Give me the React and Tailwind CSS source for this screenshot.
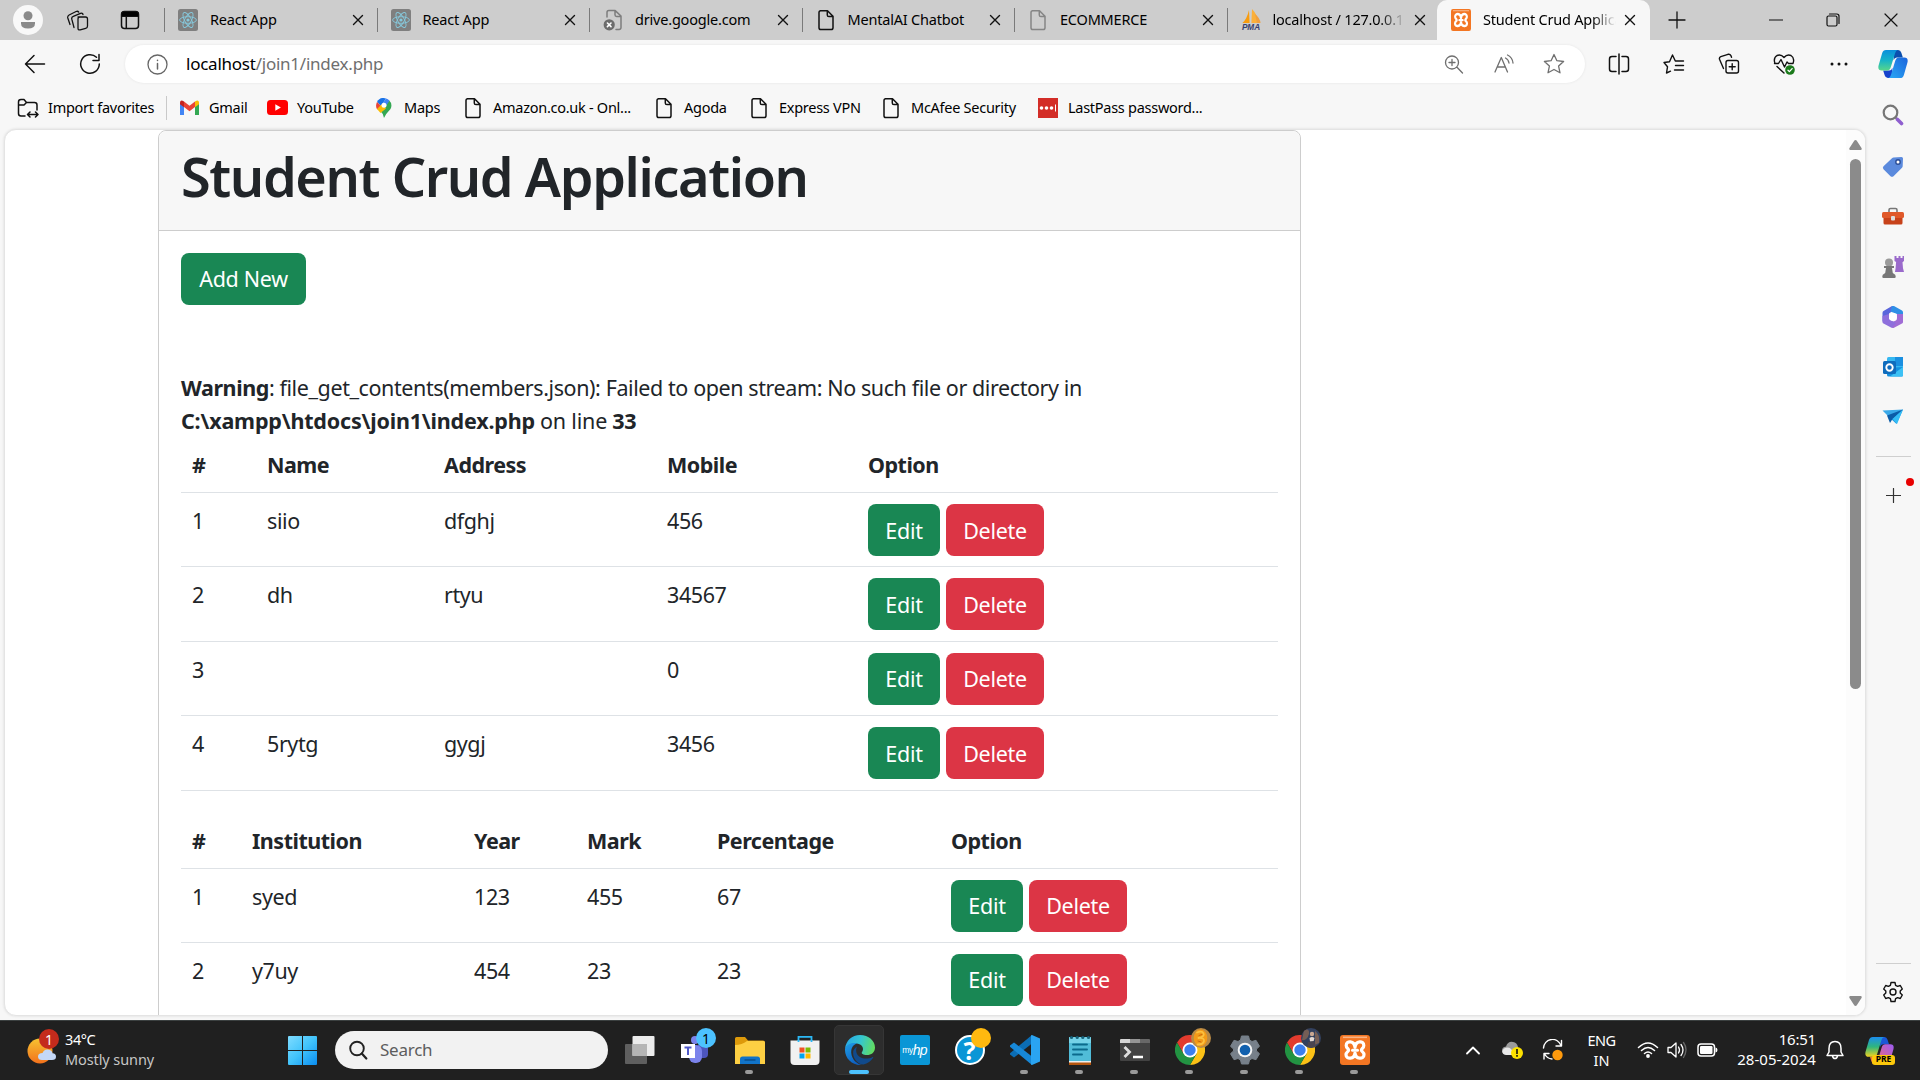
import React from "react";

/* ---------- small drawing helpers ---------- */

function Svg({ w = 20, h, vb = "0 0 20 20", children, className = "" }) {
  return (
    <svg width={w} height={h || w} viewBox={vb} fill="none" className={`shrink-0 ${className}`}>
      {children}
    </svg>
  );
}

const Line = ({ d, c = "#111", s = 1.3 }) => (
  <path d={d} stroke={c} strokeWidth={s} strokeLinecap="round" strokeLinejoin="round" />
);

/* ---------- browser icons ---------- */

const PageIcon = ({ c = "#111" }) => (
  <Svg w={20} h={22} vb="0 0 20 22">
    <Line c={c} s={1.5} d="M5 1.8h6.5L17 7.3v11.4a1.8 1.8 0 0 1-1.8 1.8H4.8A1.8 1.8 0 0 1 3 18.7V3.6A1.8 1.8 0 0 1 4.8 1.8M11.3 2v4a1.6 1.6 0 0 0 1.6 1.6h4" />
  </Svg>
);

const BlockedPageIcon = () => (
  <Svg w={20} h={22} vb="0 0 20 22">
    <Line c="#7d7d7d" s={1.5} d="M4 8V3.4A1.8 1.8 0 0 1 5.8 1.6h6.4L18 7v11.6a1.8 1.8 0 0 1-1.8 1.8H13M12 1.8v4a1.6 1.6 0 0 0 1.6 1.6h4" />
    <circle cx="6.2" cy="15.8" r="5.6" fill="#6c6c6c" />
    <Line c="#fff" s={1.6} d="M4.4 14l3.6 3.6M8 14l-3.6 3.6" />
  </Svg>
);

const ReactIcon = () => (
  <Svg w={20} h={22} vb="0 0 20 22">
    <rect width="20" height="22" rx="2.5" fill="#7f7f7f" />
    <g stroke="#86cade" strokeWidth=".9">
      <ellipse cx="10" cy="11" rx="8.4" ry="3.3" />
      <ellipse cx="10" cy="11" rx="8.4" ry="3.3" transform="rotate(60 10 11)" />
      <ellipse cx="10" cy="11" rx="8.4" ry="3.3" transform="rotate(120 10 11)" />
    </g>
    <circle cx="10" cy="11" r="1.6" fill="#86cade" />
  </Svg>
);

const PmaIcon = () => (
  <Svg w={22} h={22} vb="0 0 22 22">
    <path d="M9 1L9.6 14H2.4Q7 10 9 1Z" fill="#f89c0e" />
    <path d="M12 0Q18 6 18 14H11.4Z" fill="#fbb03b" />
    <path d="M15 5Q20 9 20.5 14H17Z" fill="#f0a040" />
    <text x="11" y="21.4" textAnchor="middle" fontSize="8.2" fontWeight="bold" fontStyle="italic" fill="#37406f" fontFamily="Liberation Sans, sans-serif">PMA</text>
  </Svg>
);

const XamppIcon = ({ w = 20, h = 22 }) => (
  <svg width={w} height={h} viewBox="0 0 30 30" preserveAspectRatio="none" fill="none" className="shrink-0">
    <rect width="30" height="30" rx="3" fill="#f37623" />
    <path d="M3 1.5h24v1.6H3z" fill="#f9b384" />
    <path d="M15 12.4C14.4 5.2 6.2 5.4 6.2 10.4C6.2 13 8.6 13.6 8.6 15.2C8.6 16.6 6 17 6 19.8C6 24.6 14.4 24.6 15 18C15.600 24.600 24 24.600 24 19.800C24 17 21.400 16.600 21.400 15.200C21.400 13.600 23.800 13 23.800 10.400C23.800 5.400 15.600 5.200 15 12.400Z" stroke="#fff" strokeWidth="3.2" strokeLinejoin="round" />
    <path d="M12.500 15.200h5" stroke="#fff" strokeWidth="3" strokeLinecap="round" />
  </svg>
);

const CloseX = () => (
  <Svg w={12} vb="0 0 12 12">
    <Line s={1.4} d="M1.500 1.500l9 9M10.500 1.500l-9 9" />
  </Svg>
);

const CopilotIcon = ({ s = 31, warm = false }) => (
  <Svg w={s} vb="0 0 32 32">
    <defs>
      <linearGradient id={warm ? "cw1" : "cc1"} x1="0" y1="0" x2="0" y2="1">
        <stop stopColor={warm ? "#1b8df0" : "#0a8fdc"} />
        <stop offset=".5" stopColor={warm ? "#2fb67c" : "#16b3c8"} />
        <stop offset="1" stopColor={warm ? "#f2d21f" : "#58d68a"} />
      </linearGradient>
      <linearGradient id={warm ? "cw2" : "cc2"} x1="1" y1="0" x2="0" y2="1">
        <stop stopColor={warm ? "#9b5cf5" : "#1b64dc"} />
        <stop offset="1" stopColor={warm ? "#f76a6a" : "#2aa9f5"} />
      </linearGradient>
    </defs>
    <path d="M17 1h4.500q2.500 0 3.400 3l1.600 5H20q-2.500 0-3.400 3z" fill={warm ? "#1a57d6" : "#0b4fae"} />
    <path d="M15 31h-4.500q-2.500 0-3.400-3l-1.600-5H12q2.500 0 3.400-3z" fill={warm ? "#f27d3a" : "#1542cc"} />
    <path d="M8.500 1H21q-2 .6-2.800 3.400l-4.600 15Q12.600 23 9.500 23H4Q-.6 23 .6 17.500L4.400 4.400Q5.500 1 8.500 1Z" fill={warm ? "url(#cw1)" : "url(#cc1)"} />
    <path d="M23.500 31H11q2-.6 2.800-3.400l4.600-15Q19.400 9 22.500 9H28q4.600 0 3.400 5.500L27.600 27.600Q26.500 31 23.500 31Z" fill={warm ? "url(#cw2)" : "url(#cc2)"} />
  </Svg>
);

/* ---------- tab strip ---------- */

function Tab({ icon, title, fade = false }) {
  return (
    <div className="flex h-10 w-[212.500px] shrink-0 items-center">
      <div className="h-6 w-px shrink-0 bg-[#7a7a7a]" />
      <div className="ml-3 flex w-[22px] shrink-0 justify-center">{icon}</div>
      <div className={`ml-[11px] flex-1 overflow-hidden whitespace-nowrap text-[14.500px] tracking-[-0.200px] ${fade ? "[mask-image:linear-gradient(to_right,black_80%,transparent)]" : ""}`}>{title}</div>
      <div className="mr-[13px] ml-2"><CloseX /></div>
    </div>
  );
}

function TabStrip() {
  return (
    <div className="flex h-10 items-center bg-[#cdcdcd]">
      <div className="ml-[13px] flex h-[30px] w-[30px] items-center justify-center rounded-full bg-[#f8f8f8]">
        <Svg w={18} vb="0 0 18 18">
          <circle cx="9" cy="4.700" r="4.500" fill="#8a8a8a" />
          <path d="M2 11h14v1.500q0 5-7 5t-7-5z" fill="#8a8a8a" />
        </Svg>
      </div>
      <div className="ml-[23px]">
        <Svg w={23} h={21} vb="0 0 23 21">
          <Line s={1.300} d="M12 7h7.500q2 0 2 2v7q0 2-1.800 2.400l-5.500 1.500q-2.200.4-2.200-1.700V9q0-2 2-2M8 17.500L5.800 9.200q-.5-2.200 1.500-2.900l7.200-3q2-.6 2.500 1.200M4 14.500L1.800 8q-.5-2 1.300-3l7-3.500q1.800-.7 2.600.6" />
        </Svg>
      </div>
      <div className="ml-[31px]">
        <Svg w={20} vb="0 0 20 20">
          <rect x="1.500" y="1.500" width="17" height="17" rx="3" stroke="#111" strokeWidth="1.500" />
          <path d="M1.500 6.500V4a2.500 2.500 0 0 1 2.500-2.500h12A2.500 2.500 0 0 1 18.500 4v2.500z" fill="#000" stroke="#111" />
          <path d="M6.300 7v11" stroke="#111" strokeWidth="1.500" />
        </Svg>
      </div>
      <div className="ml-6 flex">
        <Tab icon={<ReactIcon />} title="React App" />
        <Tab icon={<ReactIcon />} title="React App" />
        <Tab icon={<BlockedPageIcon />} title="drive.google.com" />
        <Tab icon={<PageIcon />} title="MentalAI Chatbot" />
        <Tab icon={<PageIcon c="#858585" />} title="ECOMMERCE" />
        <Tab icon={<PmaIcon />} title="localhost / 127.0.0.1" fade />
      </div>
      <div className="-ml-[2px] flex h-10 w-[213px] items-center rounded-t-[10px] bg-[#f7f7f7]">
        <div className="ml-[14px]"><XamppIcon w={20} h={22} /></div>
        <div className="ml-3 flex-1 overflow-hidden text-[14.500px] tracking-[-0.220px] whitespace-nowrap [mask-image:linear-gradient(to_right,black_82%,transparent)]">Student Crud Application</div>
        <div className="mr-[14px] ml-2"><CloseX /></div>
      </div>
      <div className="ml-[18px]"><Svg w={18} vb="0 0 18 18"><Line d="M9 1v16M1 9h16" /></Svg></div>
      <div className="ml-[83px]"><Svg w={14} vb="0 0 14 14"><Line s={1.200} d="M.5 7h13" /></Svg></div>
      <div className="ml-[43px]">
        <Svg w={14} vb="0 0 14 14">
          <rect x="1" y="3" width="10" height="10" rx="1.500" stroke="#111" strokeWidth="1.200" />
          <Line s={1.200} d="M3.500 1h7.300q2.200 0 2.200 2.200v7.300" />
        </Svg>
      </div>
      <div className="ml-[44px]"><Svg w={14} vb="0 0 14 14"><Line s={1.200} d="M1 1l12 12M13 1L1 13" /></Svg></div>
    </div>
  );
}

/* ---------- address row ---------- */

function Toolbar() {
  return (
    <div className="flex h-12 items-center bg-[#f7f7f7]">
      <div className="ml-6"><Svg w={22} vb="0 0 22 22"><Line s={1.500} d="M20.500 11H1.500M10 2.500L1.500 11l8.500 8.500" /></Svg></div>
      <div className="ml-[33px]"><Svg w={22} vb="0 0 22 22"><Line s={1.500} d="M20.300 11A9.300 9.300 0 1 1 17.500 4.300M20 1.500v6h-6" /></Svg></div>
      <div className="ml-6 flex h-[38px] w-[1460px] items-center rounded-full bg-white shadow-[0_0_3px_rgba(0,0,0,0.080)]">
        <div className="ml-[22px]">
          <Svg w={21} vb="0 0 21 21">
            <circle cx="10.500" cy="10.500" r="9.500" stroke="#666" strokeWidth="1.300" />
            <Line c="#666" s={1.500} d="M10.500 9.500v5.500M10.500 6.300v.2" />
          </Svg>
        </div>
        <div className="ml-[18px] text-[17px] tracking-[-0.240px] text-[#6f6f6f]"><span className="text-black">localhost</span>/join1/index.php</div>
        <div className="mr-[20px] ml-auto flex items-center gap-[28px]">
          <Svg w={21} vb="0 0 21 21"><Line c="#6f6f6f" s={1.300} d="M14.500 8.500a6.500 6.500 0 1 1-13 0a6.500 6.500 0 0 1 13 0zM13 13.200l5.500 5.800M8 5.500v6M5 8.500h6" /></Svg>
          <Svg w={22} vb="0 0 22 22"><Line c="#6f6f6f" s={1.300} d="M2 19L8.300 4.500L14.500 19M4.200 14h8.200M12.500 5q3 1.500 3.500 5M14.500 2q5 2.500 5.500 8" /></Svg>
          <Svg w={22} vb="0 0 22 22"><Line c="#6f6f6f" s={1.300} d="M11 1.500l2.900 6.200 6.700.8-5 4.600 1.400 6.700L11 16.500l-6 3.300 1.400-6.700-5-4.600 6.700-.8z" /></Svg>
        </div>
      </div>
      <div className="ml-[23px] flex items-center gap-[33px]">
        <Svg w={22} vb="0 0 22 22"><Line s={1.500} d="M8 3.500H4Q1.500 3.500 1.500 6v10Q1.500 18.500 4 18.500h4M14 3.500h4q2.500 0 2.500 2.500v10q0 2.500-2.500 2.500h-4M11 1v20" /></Svg>
        <Svg w={22} vb="0 0 22 22"><Line s={1.400} d="M7.500 18.200L3.500 20l1-6.200L1 9.500l5.500-.8L9.500 2l2.800 6h8.200M12.500 12.500h8M11.500 17h9" /></Svg>
        <Svg w={22} vb="0 0 22 22"><Line s={1.400} d="M10 7.500h8.500q2 0 2 2V18q0 2-2 2H10q-2 0-2-2V9.500q0-2 2-2zM14.200 10.700v6M11.200 13.700h6M5.500 15.500l-4-9.200Q1 4.500 2.800 3.700L10 1.300q2-.5 3 1.500l.5 1.500" /></Svg>
        <Svg w={22} vb="0 0 22 22">
          <Line s={1.400} d="M2 10.500Q0 5 4 2.500q4-1.500 7 2 3-3.500 7-2 4 2.500 2 8M4 13.500l7 6.500M1.500 10.500h4l2.500-4 3.500 7.500 2.500-5 1.500 1.500h4" />
          <circle cx="17" cy="17" r="4.800" fill="#1b7a1b" />
          <Line c="#fff" s={1.300} d="M15 17.200l1.400 1.400 2.700-3" />
        </Svg>
        <Svg w={22} vb="0 0 22 22"><g fill="#111"><circle cx="4" cy="11" r="1.500" /><circle cx="11" cy="11" r="1.500" /><circle cx="18" cy="11" r="1.500" /></g></Svg>
      </div>
      <div className="ml-[28px]"><CopilotIcon s={30} /></div>
    </div>
  );
}

/* ---------- favourites ---------- */

function Fav({ icon, children, className }) {
  return (
    <div className={`flex shrink-0 items-center whitespace-nowrap ${className}`}>
      <div className="flex w-[22px] shrink-0 justify-center">{icon}</div>
      <span className="ml-[9px] text-[14.500px] tracking-[-0.270px]">{children}</span>
    </div>
  );
}

function Favorites() {
  return (
    <div className="flex h-[42px] items-center bg-[#f7f7f7] pb-[3px] pl-[17px]">
      <Fav className="w-[149px]" icon={<Svg w={22} h={20} vb="0 0 22 20"><Line s={1.500} d="M8 18H4Q1.500 18 1.500 15.500V4Q1.500 1.500 4 1.500h3L9.500 4.500h8Q20 4.500 20 7v5M1.500 7H7L9.500 4.500M11 16.500h9.500M13 14l-2.500 2.500L13 19M18.500 14l2.500 2.500L18.500 19" /></Svg>}>Import favorites</Fav>
      <div className="h-6 w-px bg-[#c9c9c9]" />
      <Fav className="ml-[11px] w-[88px]" icon={
        <Svg w={19} h={15} vb="0 0 19 15">
          <path d="M0 2.500V15h4V6z" fill="#4285f4" /><path d="M19 2.500V15h-4V6z" fill="#34a853" />
          <path d="M4 1.500v5.600l5.500 4.200L15 7.100V1.500L9.500 5.800z" fill="#ea4335" />
          <path d="M0 2.300v2L4 7.300V1.500Q.5-1 0 2.300z" fill="#c5221f" /><path d="M19 2.300v2l-4 3V1.500Q18.500-1 19 2.300z" fill="#fbbc04" />
        </Svg>}>Gmail</Fav>
      <Fav className="w-[107px]" icon={<Svg w={21} h={15} vb="0 0 21 15"><rect width="21" height="15" rx="3.500" fill="#f00" /><path d="M8.300 4.200v6.600l5.600-3.300z" fill="#fff" /></Svg>}>YouTube</Fav>
      <Fav className="w-[89px]" icon={
        <Svg w={16} h={20} vb="0 0 16 20">
          <path d="M8 20Q7 15 3.500 12L12.800 2Q17 6 14.500 11 10 15.500 8 20z" fill="#34a853" />
          <path d="M1 4L5 8l5-7.500Q4-1.500 1 4z" fill="#1a73e8" /><path d="M10 .5L5 8l3 3 5.500-8.200Q12 1 10 .5z" fill="#4285f4" />
          <path d="M1 4l4 4-3.800 3.500Q-1 8 1 4z" fill="#ea4335" /><path d="M1 11L6 6l4 4.500L4.500 15z" fill="#fbbc04" />
          <circle cx="8" cy="7.300" r="2.500" fill="#fff" />
        </Svg>}>Maps</Fav>
      <Fav className="w-[191px]" icon={<PageIcon />}>Amazon.co.uk - Onl...</Fav>
      <Fav className="w-[95px]" icon={<PageIcon />}>Agoda</Fav>
      <Fav className="w-[132px]" icon={<PageIcon />}>Express VPN</Fav>
      <Fav className="w-[157px]" icon={<PageIcon />}>McAfee Security</Fav>
      <Fav icon={<Svg w={20} vb="0 0 20 20"><rect width="20" height="20" fill="#d32d27" /><g fill="#fff"><circle cx="3.500" cy="10" r="1.800" /><circle cx="8.500" cy="10" r="1.800" /><circle cx="13.500" cy="10" r="1.800" /><path d="M17 6.500h1v7h-1z" /></g></Svg>}>LastPass password...</Fav>
    </div>
  );
}

/* ---------- page ---------- */

const Btn = ({ children, className }) => (
  <button className={`flex h-[52px] items-center justify-center rounded-lg text-[21.500px] text-white ${className}`}>{children}</button>
);

const Actions = () => (
  <div className="flex gap-[6px] pt-[11px]">
    <Btn className="w-[72px] bg-[#198754] tracking-[-0.200px]">Edit</Btn>
    <Btn className="w-[98px] bg-[#dc3545] tracking-[-0.300px]">Delete</Btn>
  </div>
);

function DataTable({ cols, head, rows }) {
  return (
    <div className="text-[21.500px] leading-[33px]">
      <div className={`grid h-[56px] border-b border-[#dee2e6] pt-[11px] pl-[11px] font-bold tracking-[-0.500px] ${cols}`}>
        {head.map((h) => <div key={h}>{h}</div>)}
      </div>
      {rows.map((r) => (
        <div key={r[0]} className={`grid h-[74.400px] border-b border-[#dee2e6] pl-[11px] tracking-[-0.420px] ${cols}`}>
          {r.map((c, i) => <div key={i} className="pt-[11px]">{c}</div>)}
          <Actions />
        </div>
      ))}
    </div>
  );
}

function Page() {
  return (
    <div className="flex h-[887px] w-[1862px] justify-between overflow-hidden rounded-xl border border-[#e4e4e4] bg-white shadow-[0_0_3px_rgba(0,0,0,0.120)]">
      <div className="ml-[153px] h-[1100px] w-[1143px] rounded-t-lg border border-[#cdcdcd] text-[#212529]">
        <div className="h-[100px] rounded-t-lg border-b border-[#cdcdcd] bg-[#f7f7f7] px-[22px] pt-[12px]">
          <h1 className="text-[54px] leading-[66px] font-semibold tracking-[-1.400px]">Student Crud Application</h1>
        </div>
        <div className="px-[22px] pt-[22px]">
          <Btn className="w-[125px] bg-[#198754] tracking-[-0.300px]">Add New</Btn>
          <div className="mt-[66px] text-[21.500px] leading-[33px] tracking-[-0.410px]">
            <b>Warning</b>: file_get_contents(members.json): Failed to open stream: No such file or directory in
            <br />
            <b className="tracking-[-0.190px]">C:\xampp\htdocs\join1\index.php</b> <span className="tracking-[-0.200px]">on line</span> <b>33</b>
          </div>
          <DataTable
            cols="grid-cols-[75px_177px_223px_201px_1fr]"
            head={["#", "Name", "Address", "Mobile", "Option"]}
            rows={[["1", "siio", "dfghj", "456"], ["2", "dh", "rtyu", "34567"], ["3", "", "", "0"], ["4", "5rytg", "gygj", "3456"]]}
          />
          <div className="mt-[22px]">
            <DataTable
              cols="grid-cols-[60px_222px_113px_130px_234px_1fr]"
              head={["#", "Institution", "Year", "Mark", "Percentage", "Option"]}
              rows={[["1", "syed", "123", "455", "67"], ["2", "y7uy", "454", "23", "23"]]}
            />
          </div>
        </div>
      </div>
      <div className="flex w-[19px] flex-col items-center bg-[#fcfcfc]">
        <Svg w={13} h={10} vb="0 0 13 10" className="mt-[10px]"><path d="M6.500 0q.8 0 1.300.8L12.500 8q.8 2-1 2h-10q-1.800 0-1-2L5.200.8Q5.700 0 6.500 0z" fill="#8b8b8b" /></Svg>
        <div className="mt-[9px] h-[530px] w-[11px] rounded-full bg-[#8b8b8b]" />
        <Svg w={13} h={10} vb="0 0 13 10" className="mt-auto mb-[9px]"><path d="M6.500 10q.8 0 1.300-.8L12.500 2q.8-2-1-2h-10q-1.800 0-1 2l4.700 7.200q.5.800 1.300.8z" fill="#8b8b8b" /></Svg>
      </div>
    </div>
  );
}

/* ---------- edge sidebar ---------- */

function Sidebar() {
  return (
    <div className="flex w-[54px] flex-col items-center">
      <div className="-mt-[25px] flex flex-col items-center gap-[28px]">
        <Svg w={22} vb="0 0 22 22" className="mb-[2px]"><circle cx="8.500" cy="8.500" r="6.800" stroke="#767676" strokeWidth="2.200" /><path d="M13.500 13.500l2 2" stroke="#767676" strokeWidth="2" /><path d="M15.500 15.500l4 4" stroke="#8f5fcf" strokeWidth="3.600" strokeLinecap="round" /></Svg>
        <Svg w={22} vb="0 0 22 22"><path d="M11.500 1.500L19.500 1Q21 1 21 2.500L20.700 10q0 1-.7 1.700l-8.500 8.500q-1.500 1.300-3 0l-7-7q-1.300-1.500 0-3L10 2.200q.7-.7 1.500-.7z" fill="#5b8add" /><circle cx="16" cy="6" r="2.200" fill="#fff" stroke="#2c4e96" strokeWidth="1.400" /></Svg>
        <Svg w={22} vb="0 0 22 22"><path d="M7 6V4q0-1.500 1.500-1.500h5Q15 2.500 15 4v2" stroke="#777" strokeWidth="1.600" /><rect y="6" width="22" height="6" rx="1.500" fill="#e0592a" /><path d="M1.500 12h19v5q0 1.500-1.500 1.500H3q-1.500 0-1.500-1.500z" fill="#c7421a" /><rect x="9" y="10" width="4" height="4.500" rx="1" fill="#ddd" /></Svg>
        <Svg w={22} vb="0 0 22 22"><path d="M12.500 0h2v2h2V0h2v2h2V0H22v5l-1.500 1.200.5 6L22 16h-9l.6-4 .5-6L12.500 5z" fill="#9a6acb" /><circle cx="7" cy="6.500" r="4" fill="#9a9a9a" /><path d="M2 10h10v2H10l.8 5 2.400 1.800Q14.500 22 12.500 22h-11Q-.5 22 .8 18.800L3.200 17 4 12H2z" fill="#777" /></Svg>
        <Svg w={22} vb="0 0 22 22">
          <path d="M10 0L1.500 5q-1 .6-1 2v8.500L7 13V7.500L14 2.500z" fill="#5a66dc" />
          <path d="M10 0q1-.4 2 0l8 4.600q1 .7 1 2V13L15 9V8L8.500 5.500 10 0z" fill="#2f8fe6" />
          <path d="M21 8v8q0 1-1 1.600l-8 4.200q-1 .4-2 0L6 18.500 14.500 14 15 8z" fill="#a06cd5" />
          <path d="M.5 10v6q0 1 1 1.600l8 4.200L14 17l-7-4V8z" fill="#8e6fdc" />
          <circle cx="11" cy="11" r="4" fill="#fff" />
        </Svg>
        <Svg w={22} vb="0 0 22 22"><rect x="5" y="1" width="16" height="18" rx="1.500" fill="#35b8f1" /><path d="M13 1h8v9h-8z" fill="#1a8fe0" /><path d="M5 12l16-1v8q0 1.500-1.500 1.500h-13Q5 20.500 5 19z" fill="#1490df" /><path d="M21 11L8 20.500h12q1 0 1-1.500z" fill="#3cc1f5" /><rect x="1" y="5" width="13" height="13" rx="1.500" fill="#0f6cbd" /><circle cx="7.500" cy="11.500" r="3.200" stroke="#fff" strokeWidth="1.900" /></Svg>
        <Svg w={22} vb="0 0 22 22"><path d="M.5 4.500L21 3.500 7 11z" fill="#39a8e8" /><path d="M21 3.500L14.500 18 7 11z" fill="#1b94e0" /><path d="M5 9.500L21 3.500 10.500 13 8 17z" fill="#0b5ca8" /><path d="M10.500 13L21 3.500 15 18z" fill="#35bdf5" /></Svg>
      </div>
      <div className="mt-[28px] h-px w-[35px] bg-[#cfcfcf]" />
      <div className="relative mt-[31px]">
        <Svg w={15} vb="0 0 15 15"><Line s={1.200} c="#333" d="M7.500 .5v14M.5 7.500h14" /></Svg>
        <div className="absolute -top-[10px] left-[20px] h-2 w-2 rounded-full bg-[#e80000]" />
      </div>
      <div className="mt-auto h-px w-[35px] bg-[#cfcfcf]" />
      <Svg w={22} vb="0 0 22 22" className="mt-[17px] mb-[17px]">
        <Line s={1.400} d="M9 1.500h4l.6 2.800 2 1.100 2.700-.9 2 3.500-2.100 1.900v2.200l2.100 1.900-2 3.500-2.700-.9-2 1.100L13 20.500H9l-.6-2.800-2-1.100-2.700.9-2-3.500 2.100-1.900V9.900L1.700 8l2-3.500 2.700.9 2-1.100z" />
        <circle cx="11" cy="11" r="3" stroke="#111" strokeWidth="1.400" />
      </Svg>
    </div>
  );
}

/* ---------- taskbar ---------- */

function Slot({ children, mark, badge }) {
  return (
    <div className="relative flex h-[60px] w-[55px] shrink-0 items-center justify-center">
      {mark === "active" && <div className="absolute top-[5px] left-[2px] h-[50px] w-[50px] rounded-[5px] border border-[#363636] bg-[#2d2d2d]" />}
      <div className="relative">{children}</div>
      {badge}
      {mark === "dot" && <div className="absolute bottom-[6px] left-[23px] h-1 w-2 rounded-full bg-[#9a9a9a]" />}
      {mark === "active" && <div className="absolute bottom-[6px] left-[17px] h-1 w-5 rounded-full bg-[#4cc2ff]" />}
    </div>
  );
}

const ChromeIcon = () => (
  <Svg w={30} vb="0 0 30 30">
    <path d="M2 7.500A15 15 0 0 1 28 7.500H15L8.500 18.700z" fill="#e33b2e" />
    <path d="M28 7.500A15 15 0 0 1 15 30l6.500-11.300L15 7.500z" fill="#fbc116" />
    <path d="M15 30A15 15 0 0 1 2 7.500l6.500 11.200H21.500z" fill="#229342" />
    <circle cx="15" cy="15" r="7.500" fill="#fff" /><circle cx="15" cy="15" r="5.700" fill="#3b7ff0" />
  </Svg>
);

function Taskbar() {
  return (
    <div className="flex h-[60px] items-center border-t border-[#3b4040] bg-[#202020] pb-px text-white">
      <div className="relative ml-[27px] h-[36px] w-[38px] shrink-0">
        <div className="-mt-[2px]">
          <Svg w={38} h={36} vb="0 0 38 36">
            <defs><linearGradient id="sun" x1="0" y1="0" x2="0" y2="1"><stop stopColor="#f7c331" /><stop offset="1" stopColor="#f2711c" /></linearGradient></defs>
            <circle cx="13" cy="21" r="12.500" fill="url(#sun)" />
            <path d="M15 30q-4 0-4-3.500t4.500-3.500q1.500-4 5.500-3.500t4.500 3.700Q29 23.500 29 26.700T25 30z" fill="#c4d8f7" />
          </Svg>
        </div>
        <div className="absolute -top-[3px] left-[12px] flex h-5 w-5 items-center justify-center rounded-full bg-[#c42b1c] text-[14px]">1</div>
      </div>
      <div className="-mt-[2px] w-[223px] text-[14.500px] leading-[20px]">
        <div className="tracking-[-0.400px]">34°C</div>
        <div className="tracking-[-0.100px] text-[#c6c6c6]">Mostly sunny</div>
      </div>
      <Svg w={29} vb="0 0 29 29">
        <defs><linearGradient id="win" x1="0" y1="0" x2="1" y2="1"><stop stopColor="#7fdcff" /><stop offset=".5" stopColor="#41c3fb" /><stop offset="1" stopColor="#0a8df0" /></linearGradient></defs>
        <path d="M1 0h13v14H0V1q0-1 1-1zM15 0h13q1 0 1 1v13H15zM0 15h14v14H1q-1 0-1-1zM15 15h14v13q0 1-1 1H15z" fill="url(#win)" />
      </Svg>
      <div className="ml-[18px] flex h-[38px] w-[273px] shrink-0 items-center rounded-full bg-[#f2f2f2] text-[17px] text-[#5d5d5d]">
        <Svg w={20} vb="0 0 20 20" className="mr-[12px] ml-[13px]"><circle cx="9" cy="8.500" r="6.800" stroke="#222" strokeWidth="1.900" /><path d="M13.800 13.500l4.500 5" stroke="#222" strokeWidth="2.200" strokeLinecap="round" /></Svg>
        <span className="tracking-[-0.250px]">Search</span>
      </div>
      <div className="ml-[4px] flex">
        <Slot><Svg w={30} vb="0 0 30 30"><rect y="9" width="22" height="20" rx="1" fill="#5f5f5f" /><rect x="7.500" y="1" width="22" height="20" rx="1" fill="#ececec" /><path d="M7.500 9H22v12H7.500z" fill="#b5b5b5" /></Svg></Slot>
        <Slot badge={<div className="absolute top-[8px] left-[29px] flex h-5 w-5 items-center justify-center rounded-full bg-[#4cc2ff] text-[14px] text-black">1</div>}>
          <Svg w={30} vb="0 0 30 30"><circle cx="15" cy="5" r="4" fill="#7b83eb" /><rect x="17" y="9" width="11" height="14" rx="4" fill="#4d55bd" /><rect x="9" y="10" width="13" height="18" rx="6" fill="#7b83eb" /><rect x="1" y="9" width="14" height="14" fill="#fff" /><path d="M4.500 12.500h7M8 12.500v7.500" stroke="#5059c9" strokeWidth="2" /></Svg>
        </Slot>
        <Slot mark="dot"><Svg w={30} vb="0 0 30 30"><path d="M1.500 2H10l3 3.500h15q2 0 2 2V12H0V3.500Q0 2 1.500 2z" fill="#dd9a0b" /><path d="M0 10q7 0 12-4h16.500Q30 6 30 7.500V29H0z" fill="#fdcf43" /><path d="M5 29v-5q0-2.500 2.500-2.500h15Q25 21.500 25 24v5z" fill="#1173c8" /><path d="M9.500 25h11" stroke="#0a4b88" strokeWidth="1.400" /></Svg></Slot>
        <Slot><Svg w={30} vb="0 0 30 30"><path d="M8.500 8V1.800h13V8" stroke="#2bb8f5" strokeWidth="1.800" /><path d="M.5 5.500h29V26q0 4-4 4h-21q-4 0-4-4z" fill="#f1f1f1" /><path d="M8.500 5V7M21.500 5v2" stroke="#2bb8f5" strokeWidth="1.800" /><path d="M9.500 12.500h5v5h-5z" fill="#f25022" /><path d="M15.500 12.500h5v5h-5z" fill="#7fba00" /><path d="M9.500 18.500h5v5h-5z" fill="#00a4ef" /><path d="M15.500 18.500h5v5h-5z" fill="#ffb900" /></Svg></Slot>
        <Slot mark="active">
          <Svg w={30} vb="0 0 24 24">
            <defs>
              <linearGradient id="e1" x1="0" y1=".3" x2="1" y2=".5"><stop stopColor="#27a8e8" /><stop offset=".5" stopColor="#35c6d0" /><stop offset="1" stopColor="#62dd60" /></linearGradient>
              <linearGradient id="e2" x1="0" y1="0" x2=".5" y2="1"><stop stopColor="#1f9fe8" /><stop offset="1" stopColor="#0e5fc0" /></linearGradient>
            </defs>
            <path d="M0 11C.8 4.500 5.500 0 12 0c7 0 12 4.800 12 10 0 4-3 6-6.500 6-3 0-4.600-1.200-4-2.200 2-2.500.8-6.500-4-7C5 6.500 1.500 8.500 0 11z" fill="url(#e1)" />
            <path d="M0 11C1.800 7 6 5.800 9.500 6.800c-3 .9-4.800 4-4.500 7.500.4 4.800 4.200 8.800 8.500 9.600C6 24.500 0 19 0 12z" fill="url(#e2)" />
            <path d="M9.700 9.200C7.600 10.300 6.300 12 6.500 14.700c.3 4.500 3.500 8.500 8.200 8.800 3.400-.6 6.200-2.600 7.800-5.300.3-.6-.2-.8-.7-.5-5 2.600-11.600.6-12.700-4-.4-1.900-.1-3.500.6-4.500z" fill="#114a8b" />
          </Svg>
        </Slot>
        <Slot><div className="flex h-[30px] w-[30px] items-center justify-center rounded-[2px] bg-[#0a96d6] font-['Liberation_Sans',sans-serif] text-[8.500px] tracking-[-0.500px]">my<span className="text-[14px] tracking-[-0.800px] italic">hp</span></div></Slot>
        <Slot badge={<div className="absolute top-[8px] left-[29px] h-5 w-5 rounded-full bg-[#ffb90f]" />}>
          <div className="flex h-[30px] w-[30px] items-center justify-center rounded-full border-2 border-white bg-[#0a96d6] text-[25px] leading-none font-bold">?</div>
        </Slot>
        <Slot mark="dot"><Svg w={30} vb="0 0 30 30"><path d="M22 0v8.500L4 22.500 0 19.500v-1.300z" fill="#0b6db5" /><path d="M0 11.800v-1.300L4 7.500 22 21.500V30z" fill="#1788d8" /><path d="M22 0l8 3.500v23L22 30q-1 0-1-1V1q0-1 1-1z" fill="#2aa4f2" /></Svg></Slot>
        <Slot mark="dot"><Svg w={30} vb="0 0 30 30"><path d="M4 25h22v5H4z" fill="#b5560f" /><path d="M4 25h22v2.500H4z" fill="#eee" /><path d="M4 2h22v24H4z" fill="#50bcd8" /><path d="M4 2h22v6H4z" fill="#74d2e8" /><path d="M8 9.500h14M8 14.500h14M8 19.500h9" stroke="#0b6a8c" strokeWidth="1.900" strokeLinecap="round" /><g fill="#17627a"><circle cx="6.500" cy="2.500" r="1.600" /><circle cx="12.200" cy="2.500" r="1.600" /><circle cx="17.800" cy="2.500" r="1.600" /><circle cx="23.500" cy="2.500" r="1.600" /></g></Svg></Slot>
        <Slot mark="dot"><Svg w={30} vb="0 0 30 30"><path d="M0 5h30v20q0 1-1 1H1q-1 0-1-1z" fill="#424242" /><path d="M1 4h9v4H0V5q0-1 1-1z" fill="#d5d5d5" /><path d="M10 4h10v4H10z" fill="#959595" /><path d="M20 4h9q1 0 1 1v3H20z" fill="#686868" /><path d="M4.500 12l5 5-5 5" stroke="#ddd" strokeWidth="2.800" /><path d="M13 22h10" stroke="#fff" strokeWidth="2.500" /></Svg></Slot>
        <Slot mark="dot" badge={<div className="absolute top-[8px] left-[29px] h-5 w-5 overflow-hidden rounded-full bg-[#b98a45]"><Svg w={20} vb="0 0 20 20"><ellipse cx="9.500" cy="10" rx="6.800" ry="8.500" fill="#f39a18" /><Line c="#fcc23f" s={1.800} d="M6 4.500q5-2 6.500 1t-5 4.500q6-.5 5.500 3t-6.500 3.500" /><Line c="#c96a0d" s={1} d="M8 7.500l3-1M7 13l3 1" /></Svg></div>}><ChromeIcon /></Slot>
        <Slot mark="dot"><Svg w={30} vb="0 0 30 30"><path d="M11.500 1h7l1 4 2.500 1.500 4-1.200 3.500 6L26.500 14v2l3 2.700-3.500 6-4-1.200-2.500 1.500-1 4h-7l-1-4L8 23.500l-4 1.200-3.500-6L3.500 16v-2L.5 11.300l3.500-6 4 1.200L10.500 5z" fill="#77808a" stroke="#77808a" strokeLinejoin="round" /><circle cx="15" cy="15" r="7.300" fill="#f5f5f5" /><circle cx="15" cy="15" r="5.300" fill="#1160ae" /></Svg></Slot>
        <Slot mark="dot" badge={<div className="absolute top-[8px] left-[29px] h-5 w-5 overflow-hidden rounded-full bg-[#33415e]"><Svg w={20} vb="0 0 20 20"><path d="M3 2q6-2 5 4-2 7-7 6zM14 3q5 3 4 12l-4 2z" fill="#755e55" /><circle cx="11" cy="6" r="2.200" fill="#c9a792" /><path d="M8.500 10q2.500-2 5 0l-1 3.500H9z" fill="#e3d8d2" /><path d="M7 14l6-1 3 7H6z" fill="#4a4550" /></Svg></div>}><ChromeIcon /></Slot>
        <Slot mark="dot"><XamppIcon w={30} h={30} /></Slot>
      </div>

      <div className="ml-[84px] flex items-center">
        <Svg w={14} h={9} vb="0 0 14 9"><Line c="#fff" s={1.800} d="M1 7.500l6-6 6 6" /></Svg>
        <Svg w={22} h={20} vb="0 0 22 20" className="ml-[22px]"><path d="M5 15Q0 15 0 10.500 0 7 4 6.500 6 1 11 2q4 .5 5 5v8z" fill="#9b9b9b" /><path d="M1.500 14Q-1 11 2 8.500 6 6.500 9 9l4 5-1 1H4z" fill="#e8e8e8" /><circle cx="15" cy="13" r="6" fill="#fce100" /><path d="M14.200 9h1.600v5h-1.600zM14.200 15h1.600v1.700h-1.600z" fill="#111" /></Svg>
        <Svg w={22} vb="0 0 22 22" className="ml-[18px]"><Line c="#fff" s={1.400} d="M1.500 9A9 9 0 0 1 19 6.500M19.500 1.500V7H14M2 20v-5.500h5M2.500 15Q5 19.500 10 20" /><circle cx="15.500" cy="16" r="5.200" fill="#ff9a0d" /></Svg>
        <div className="-mt-px ml-[22px] w-[31px] text-center text-[14.500px] leading-[20px]"><div className="tracking-[-0.600px]">ENG</div><div>IN</div></div>
        <Svg w={22} h={18} vb="0 0 22 18" className="ml-[20px]"><Line c="#fff" s={1.500} d="M1.500 6.500Q11-2.500 20.500 6.500M4.500 9.500q6.500-6 13 0M7.500 12.500q3.500-3 7 0" /><circle cx="11" cy="15" r="1.900" fill="#fff" /></Svg>
        <Svg w={20} h={18} vb="0 0 20 18" className="ml-[8px]"><Line c="#fff" s={1.300} d="M1 6.500h3L9 2v14l-5-4.500H1zM11.500 6q2 3 0 6M14 3.500q4 5.500 0 11" /><Line c="#666" s={1.300} d="M16.500 1.500q5 7 0 15" /></Svg>
        <Svg w={21} h={14} vb="0 0 21 14" className="ml-[10px]"><rect x="1" y="1" width="16.500" height="12" rx="3" stroke="#fff" strokeWidth="1.500" /><rect x="3" y="3" width="12.500" height="8" rx="1.200" fill="#fff" /><path d="M18.500 4.500q2 .3 2 2.500t-2 2.500z" fill="#fff" /></Svg>
        <div className="-mt-[2px] ml-[12px] flex w-[86px] flex-col items-end text-[15px] leading-[20px] whitespace-nowrap"><div className="tracking-[-0.200px]">16:51</div><div className="tracking-[0.050px]">28-05-2024</div></div>
        <Svg w={18} h={20} vb="0 0 18 20" className="ml-[10px]"><Line c="#fff" s={1.500} d="M3 8.500Q3 1.500 9 1.500t6 7v3.500l2 3.500H1L3 12zM6.500 16q.5 2.500 2.500 2.500t2.500-2.500" /></Svg>
        <div className="relative ml-[21px]">
          <CopilotIcon s={29} warm />
          <div className="absolute top-[19px] left-[7px] flex h-[10px] w-[23px] items-center justify-center rounded-[3px] bg-[#fdc80b] text-[8.500px] leading-none font-bold text-black">PRE</div>
        </div>
      </div>
    </div>
  );
}

export default function App() {
  return (
    <div className="flex h-[1080px] w-[1920px] flex-col overflow-hidden bg-[#f7f7f7] font-['Noto_Sans','Open_Sans',sans-serif] text-black">
      <TabStrip />
      <Toolbar />
      <Favorites />
      <div className="-mt-px flex h-[891px] pl-1">
        <Page />
        <Sidebar />
      </div>
      <Taskbar />
    </div>
  );
}
